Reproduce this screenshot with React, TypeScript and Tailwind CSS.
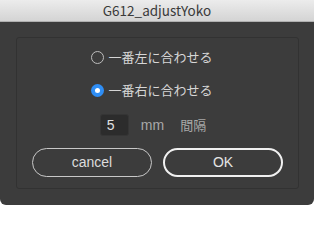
import React, { useState } from "react";

const jp = { fontFamily: '"Noto Sans CJK JP", "Noto Sans", sans-serif' };
const latin = { fontFamily: '"Liberation Sans", sans-serif' };

function Radio({ checked, label, onClick }: { checked: boolean; label: string; onClick: () => void }) {
  return (
    <button onClick={onClick} className="flex items-center gap-[4px] h-[20px] text-[13px] text-[#d6d6d6]">
      {checked ? (
        <span className="w-[13px] h-[13px] rounded-full bg-[#2f8ef5] flex items-center justify-center">
          <span className="w-[5px] h-[5px] rounded-full bg-white" />
        </span>
      ) : (
        <span className="w-[13px] h-[13px] rounded-full border border-[#bdbdbd]" />
      )}
      <span>{label}</span>
    </button>
  );
}

export default function App() {
  const [side, setSide] = useState("right");
  const [gap, setGap] = useState("5");

  return (
    <div className="w-[314px] h-[205px] bg-white" style={jp}>
      <div className="w-full h-full bg-[#3c3c3c] rounded-b-[6px] overflow-hidden flex flex-col">
        <div className="h-[22px] shrink-0 bg-gradient-to-b from-[#ececec] to-[#d4d4d4] border-b border-[#b0b0b0] flex items-center justify-center text-[13.5px] text-[#3a3a3a]">
          G612_adjustYoko
        </div>
        <div className="pt-[15px] px-[16px]">
          <div className="w-[283px] h-[152px] border border-[#323232] rounded-[3px] flex flex-col items-center">
            <div className="flex flex-col items-start gap-[13px] mt-[9px] ml-[-11px]">
              <Radio checked={side === "left"} label="一番左に合わせる" onClick={() => setSide("left")} />
              <Radio checked={side === "right"} label="一番右に合わせる" onClick={() => setSide("right")} />
            </div>
            <div className="flex items-center mt-[14px] ml-[-9px] text-[13px]">
              <input
                value={gap}
                onChange={(e) => setGap(e.target.value)}
                className="w-[29px] h-[22px] bg-[#2c2c2c] border border-[#353535] rounded-[3px] pl-[6px] text-[14px] text-[#e0e0e0] outline-none"
                style={latin}
              />
              <span className="ml-[12px] text-[14px] text-[#a8a8a8]" style={latin}>mm</span>
              <span className="ml-[16px] text-[#a8a8a8]">間隔</span>
            </div>
            <div className="flex gap-[11px] mt-[12px]">
              <button className="w-[120px] h-[29px] rounded-full border border-[#c8c8c8] text-[14px] text-[#dcdcdc]" style={latin}>
                cancel
              </button>
              <button className="w-[120px] h-[29px] rounded-full border-2 border-[#f0f0f0] text-[14px] text-[#e4e4e4]" style={latin}>
                OK
              </button>
            </div>
          </div>
        </div>
      </div>
    </div>
  );
}
